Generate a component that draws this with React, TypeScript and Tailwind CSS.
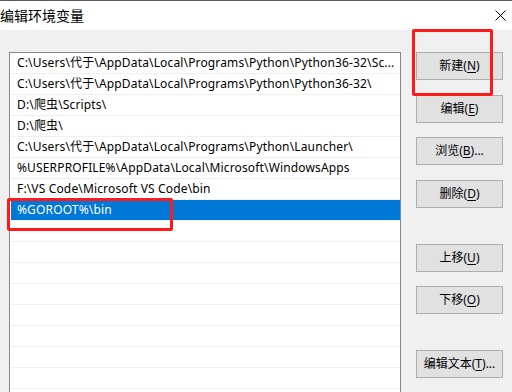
const paths = [
  'C:\\Users\\代于\\AppData\\Local\\Programs\\Python\\Python36-32\\Sc...',
  'C:\\Users\\代于\\AppData\\Local\\Programs\\Python\\Python36-32\\',
  'D:\\爬虫\\Scripts\\',
  'D:\\爬虫\\',
  'C:\\Users\\代于\\AppData\\Local\\Programs\\Python\\Launcher\\',
  '%USERPROFILE%\\AppData\\Local\\Microsoft\\WindowsApps',
  'F:\\VS Code\\Microsoft VS Code\\bin',
  '%GOROOT%\\bin',
]

const selectedIndex = 7

function Btn({ label, hotkey, suffix = '' }: { label: string; hotkey: string; suffix?: string }) {
  return (
    <button className="flex h-[28px] w-[87px] items-center justify-center border border-[#adadad] bg-[#e1e1e1] text-[12px] text-black">
      {label}(<span className="underline underline-offset-2">{hotkey}</span>){suffix}
    </button>
  )
}

export default function App() {
  const rows = [...paths, ...Array(10).fill('')]
  return (
    <div
      className="relative h-[392px] w-[512px] overflow-hidden bg-[#f0f0f0]"
      style={{ fontFamily: '"Noto Sans", "Noto Sans CJK SC", sans-serif' }}
    >
      <div className="flex h-[30px] items-center justify-between border-t border-[#5a5a5a] bg-white">
        <span className="text-[14px] text-black">编辑环境变量</span>
        <svg width="11" height="11" viewBox="0 0 11 11" className="mr-[6px]">
          <path d="M0.5 0.5 L10.5 10.5 M10.5 0.5 L0.5 10.5" stroke="#000" strokeWidth="1" />
        </svg>
      </div>

      <div className="flex">
        <div className="ml-[9px] mt-[22px] h-[400px] w-[392px] border border-[#828790] bg-white">
          {rows.map((p, i) => (
            <div
              key={i}
              className={
                'ml-[1px] h-[21px] overflow-hidden whitespace-nowrap border-b border-[#f0f0f0] pl-[6px] text-[12px] leading-[20px] tracking-[0.15px] ' +
                (i === selectedIndex ? 'bg-[#0078d7] text-white' : 'text-black')
              }
            >
              {p}
            </div>
          ))}
        </div>

        <div className="ml-[15px] mt-[22px] flex flex-col">
          <Btn label="新建" hotkey="N" />
          <div className="mt-[15px]"><Btn label="编辑" hotkey="E" /></div>
          <div className="mt-[14px]"><Btn label="浏览" hotkey="B" suffix="..." /></div>
          <div className="mt-[15px]"><Btn label="删除" hotkey="D" /></div>
          <div className="mt-[36px]"><Btn label="上移" hotkey="U" /></div>
          <div className="mt-[14px]"><Btn label="下移" hotkey="O" /></div>
          <div className="mt-[36px]"><Btn label="编辑文本" hotkey="T" suffix="..." /></div>
        </div>
      </div>

      <div className="absolute left-[412px] top-[29px] h-[67px] w-[81px] rounded-[2px] border-[3px] border-[#ff1a1a]" />
      <div className="absolute left-[7px] top-[198px] h-[33px] w-[166px] rounded-[2px] border-[3px] border-[#ff1a1a]" />
    </div>
  )
}
